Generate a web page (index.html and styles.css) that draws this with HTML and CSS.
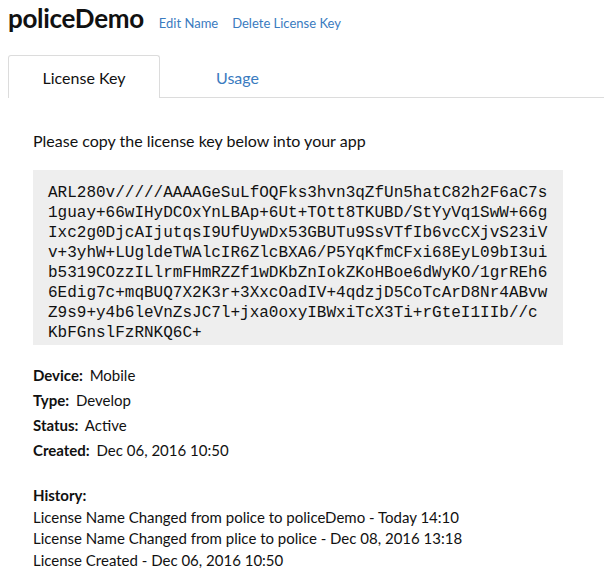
FILE: index.html
```html
<!DOCTYPE html>
<html>
<head>
<meta charset="utf-8">
<link rel="stylesheet" href="styles.css">
</head>
<body>
<div class="header">
  <h1 class="title">policeDemo</h1>
  <a class="link" href="#">Edit Name</a>
  <a class="link" href="#">Delete License Key</a>
</div>
<div class="tabs">
  <div class="tab active">License Key</div>
  <div class="tab">Usage</div>
</div>
<div class="content">
  <p class="intro">Please copy the license key below into your app</p>
  <pre class="key">ARL280v/////AAAAGeSuLfOQFks3hvn3qZfUn5hatC82h2F6aC7s
1guay+66wIHyDCOxYnLBAp+6Ut+TOtt8TKUBD/StYyVq1SwW+66g
Ixc2g0DjcAIjutqsI9UfUywDx53GBUTu9SsVTfIb6vcCXjvS23iV
v+3yhW+LUgldeTWAlcIR6ZlcBXA6/P5YqKfmCFxi68EyL09bI3ui
b5319COzzILlrmFHmRZZf1wDKbZnIokZKoHBoe6dWyKO/1grREh6
6Edig7c+mqBUQ7X2K3r+3XxcOadIV+4qdzjD5CoTcArD8Nr4ABvw
Z9s9+y4b6leVnZsJC7l+jxa0oxyIBWxiTcX3Ti+rGteI1IIb//c
KbFGnslFzRNKQ6C+</pre>
  <div class="meta">
    <div class="row"><span class="label">Device:</span> Mobile</div>
    <div class="row"><span class="label">Type:</span> Develop</div>
    <div class="row"><span class="label">Status:</span> Active</div>
    <div class="row"><span class="label">Created:</span> Dec 06, 2016 10:50</div>
  </div>
  <div class="history">
    <div class="label">History:</div>
    <div class="hrow">License Name Changed from police to policeDemo - Today 14:10</div>
    <div class="hrow">License Name Changed from plice to police - Dec 08, 2016 13:18</div>
    <div class="hrow">License Created - Dec 06, 2016 10:50</div>
  </div>
</div>
</body>
</html>
```
FILE: styles.css
```css
html, body {
  margin: 0;
  padding: 0;
  background: #fff;
}
body {
  font-family: "Lato", "Inter", sans-serif;
  color: #111;
  padding: 0 0 0 8px;
}
.header {
  display: flex;
  align-items: baseline;
  gap: 14px;
  height: 55px;
  padding-top: 2px;
  box-sizing: border-box;
}
.title {
  margin: 0 1px 0 0;
  font-size: 26px;
  font-weight: 700;
  letter-spacing: -0.3px;
  color: #111;
}
.link {
  font-size: 13px;
  color: #3a7bc0;
  text-decoration: none;
}
.tabs {
  display: flex;
  border-bottom: 1px solid #dcdcdc;
  height: 42px;
}
.tab {
  width: 152px;
  box-sizing: border-box;
  display: flex;
  align-items: center;
  justify-content: center;
  font-size: 16px;
  color: #3a7bc0;
  border: 1px solid transparent;
  border-bottom: none;
  margin-bottom: -1px;
  height: 43px;
}
.tab + .tab {
  padding-left: 3px;
}
.tab.active {
  color: #111;
  background: #fff;
  border-color: #dcdcdc;
  border-radius: 3px 3px 0 0;
}
.content {
  padding-left: 25px;
  padding-top: 33px;
}
.intro {
  margin: 0;
  font-size: 16px;
  line-height: 20px;
}
.key {
  margin: 19px 0 0 0;
  width: 530px;
  box-sizing: border-box;
  background: #eeeeee;
  font-family: "Liberation Mono", monospace;
  font-size: 16px;
  line-height: 20px;
  padding: 13px 15px 2px 15px;
  color: #111;
  white-space: pre;
}
.meta {
  margin-top: 18px;
  font-size: 15px;
}
.row {
  line-height: 25px;
}
.label {
  font-weight: 700;
  margin-right: 3px;
}
.history {
  margin-top: 22px;
  font-size: 15px;
  line-height: 21.5px;
}
```
